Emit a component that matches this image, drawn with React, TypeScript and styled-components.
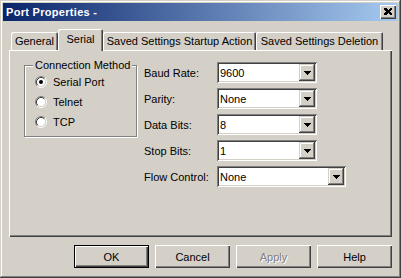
import { Fragment } from 'react'
import styled, { createGlobalStyle } from 'styled-components'

const face = '#d4d0c8'
const shadow = '#808080'
const dark = '#404040'

const GlobalStyle = createGlobalStyle`
  body {
    margin: 0;
    background: ${face};
    font-family: "Liberation Sans", Arial, sans-serif;
    font-size: 11px;
  }
`

const Window = styled.div`
  width: 401px;
  height: 278px;
  box-sizing: border-box;
  padding: 3px;
  background: ${face};
  box-shadow: inset -1px -1px ${dark}, inset 1px 1px ${face}, inset -2px -2px ${shadow}, inset 2px 2px #fff;
  display: flex;
  flex-direction: column;
`

const TitleBar = styled.div`
  height: 18px;
  display: flex;
  align-items: center;
  justify-content: space-between;
  padding: 0 2px 0 3px;
  background: linear-gradient(to right, #0a246a, #a6caf0);
`

const Title = styled.span`
  color: #fff;
  font-weight: bold;
  font-size: 11px;
  letter-spacing: 0.3px;
`

const CloseButton = styled.div`
  width: 16px;
  height: 14px;
  box-sizing: border-box;
  background: ${face};
  box-shadow: inset 1px 1px #fff, inset -1px -1px ${dark}, inset -2px -2px ${shadow};
  display: flex;
  align-items: center;
  justify-content: center;
  padding-bottom: 1px;
`

const Body = styled.div`
  display: flex;
  flex-direction: column;
  padding: 8px 6px 0;
`

const TabRow = styled.div`
  display: flex;
  align-items: flex-end;
  height: 21px;
  padding-left: 2px;
`

const Tab = styled.div<{ $active?: boolean; $w: number }>`
  position: relative;
  z-index: ${p => (p.$active ? 2 : 1)};
  width: ${p => p.$w}px;
  height: ${p => (p.$active ? 22 : 18)}px;
  margin-bottom: ${p => (p.$active ? -1 : 0)}px;
  box-sizing: border-box;
  padding-bottom: ${p => (p.$active ? 3 : 0)}px;
  background: ${face};
  border-radius: 2px 2px 0 0;
  box-shadow: inset 1px 1px #fff, inset -1px 0 ${dark}, inset -2px 0 ${shadow};
  display: flex;
  align-items: center;
  justify-content: center;
  color: #000;
  white-space: nowrap;
`

const Panel = styled.div`
  height: 187px;
  box-sizing: border-box;
  background: ${face};
  box-shadow: inset 1px 1px #fff, inset -1px -1px ${dark}, inset -2px -2px ${shadow};
  display: flex;
  align-items: flex-start;
  padding: 12px 0 0 15px;
`

const GroupBox = styled.div`
  position: relative;
  width: 113px;
  height: 72px;
  margin-top: 3px;
  box-sizing: border-box;
  border: 1px solid ${shadow};
  box-shadow: inset 1px 1px #fff, 1px 1px #fff;
  padding: 6px 0 0 10px;
`

const Legend = styled.span`
  position: absolute;
  left: 8px;
  top: -8px;
  padding: 0 2px;
  background: ${face};
  line-height: 14px;
`

const RadioRow = styled.div`
  display: flex;
  align-items: center;
  height: 20px;
  gap: 6px;
`

const Form = styled.div`
  display: grid;
  grid-template-columns: 73px auto;
  grid-auto-rows: 21px;
  row-gap: 5px;
  align-items: center;
  margin-left: 7px;
`

const Label = styled.span`
  color: #000;
`

const Combo = styled.div<{ $w: number }>`
  width: ${p => p.$w}px;
  height: 21px;
  box-sizing: border-box;
  background: #fff;
  box-shadow: inset 1px 1px ${shadow}, inset -1px -1px #fff, inset 2px 2px ${dark}, inset -2px -2px ${face};
  display: flex;
  align-items: center;
  justify-content: space-between;
  padding: 2px 2px 2px 3px;
`

const DropButton = styled.div`
  width: 16px;
  height: 17px;
  box-sizing: border-box;
  background: ${face};
  box-shadow: inset -1px -1px ${dark}, inset 1px 1px ${face}, inset -2px -2px ${shadow}, inset 2px 2px #fff;
  display: flex;
  align-items: center;
  justify-content: center;
`

const ButtonRow = styled.div`
  display: flex;
  justify-content: flex-end;
  gap: 6px;
  margin-top: 8px;
`

const Button = styled.div<{ $default?: boolean; $disabled?: boolean }>`
  width: 75px;
  height: 23px;
  box-sizing: border-box;
  border: ${p => (p.$default ? '1px solid #000' : 'none')};
  background: ${face};
  box-shadow: inset 1px 1px #fff, inset -1px -1px ${dark}, inset -2px -2px ${shadow};
  display: flex;
  align-items: center;
  justify-content: center;
  color: ${p => (p.$disabled ? shadow : '#000')};
  text-shadow: ${p => (p.$disabled ? '1px 1px #fff' : 'none')};
`

function Radio ({ checked }: { checked?: boolean }): JSX.Element {
  return (
    <svg width='12' height='12' viewBox='0 0 12 12'>
      <circle cx='6' cy='6' r='4.5' fill='#fff' />
      <path d='M2.11 9.89 A5.5 5.5 0 0 1 9.89 2.11' stroke={shadow} fill='none' />
      <path d='M9.89 2.11 A5.5 5.5 0 0 1 2.11 9.89' stroke='#fff' fill='none' />
      <path d='M2.82 9.18 A4.5 4.5 0 0 1 9.18 2.82' stroke={dark} fill='none' />
      <path d='M9.18 2.82 A4.5 4.5 0 0 1 2.82 9.18' stroke={face} fill='none' />
      {checked && <circle cx='6' cy='6' r='2' fill='#000' />}
    </svg>
  )
}

function Arrow (): JSX.Element {
  return (
    <svg width='7' height='4' viewBox='0 0 7 4' shapeRendering='crispEdges'>
      <rect x='0' y='0' width='7' height='1' fill='#000' />
      <rect x='1' y='1' width='5' height='1' fill='#000' />
      <rect x='2' y='2' width='3' height='1' fill='#000' />
      <rect x='3' y='3' width='1' height='1' fill='#000' />
    </svg>
  )
}

const tabs = [
  { name: 'General', w: 47 },
  { name: 'Serial', w: 45, active: true },
  { name: 'Saved Settings Startup Action', w: 153 },
  { name: 'Saved Settings Deletion', w: 127 }
]

const fields = [
  { label: 'Baud Rate:', value: '9600', w: 100 },
  { label: 'Parity:', value: 'None', w: 100 },
  { label: 'Data Bits:', value: '8', w: 100 },
  { label: 'Stop Bits:', value: '1', w: 100 },
  { label: 'Flow Control:', value: 'None', w: 129 }
]

export default function App (): JSX.Element {
  return (
    <>
      <GlobalStyle />
      <Window>
        <TitleBar>
          <Title>Port Properties -</Title>
          <CloseButton>
            <svg width='8' height='7' viewBox='0 0 8 7' shapeRendering='crispEdges'>
              <path d='M0 0h2l2 2 2-2h2v1l-2 2.5 2 2.5v1H6L4 5 2 7H0V6l2-2.5L0 1z' fill='#000' />
            </svg>
          </CloseButton>
        </TitleBar>
        <Body>
          <TabRow>
            {tabs.map(t => (
              <Tab key={t.name} $w={t.w} $active={t.active}>{t.name}</Tab>
            ))}
          </TabRow>
          <Panel>
            <GroupBox>
              <Legend>Connection Method</Legend>
              <RadioRow><Radio checked />Serial Port</RadioRow>
              <RadioRow><Radio />Telnet</RadioRow>
              <RadioRow><Radio />TCP</RadioRow>
            </GroupBox>
            <Form>
              {fields.map(f => (
                <Fragment key={f.label}>
                  <Label>{f.label}</Label>
                  <Combo $w={f.w}>
                    <span>{f.value}</span>
                    <DropButton><Arrow /></DropButton>
                  </Combo>
                </Fragment>
              ))}
            </Form>
          </Panel>
          <ButtonRow>
            <Button $default>OK</Button>
            <Button>Cancel</Button>
            <Button $disabled>Apply</Button>
            <Button>Help</Button>
          </ButtonRow>
        </Body>
      </Window>
    </>
  )
}
